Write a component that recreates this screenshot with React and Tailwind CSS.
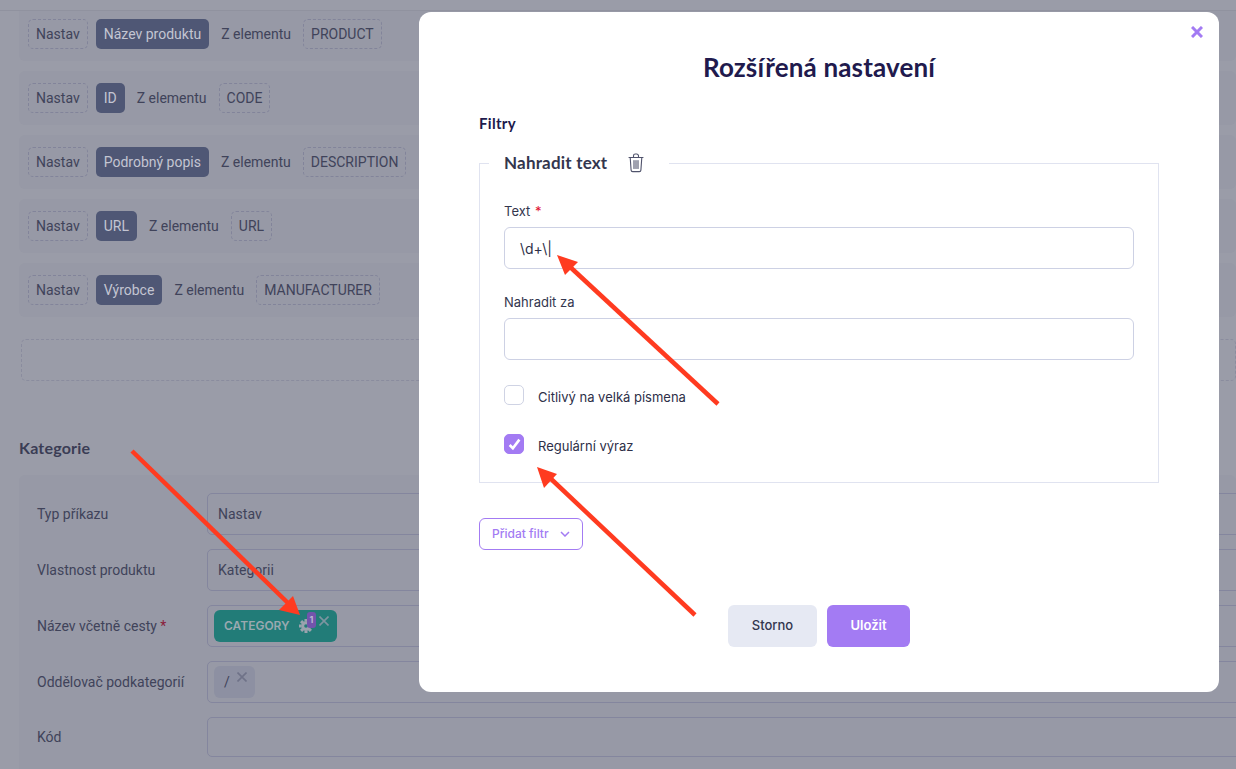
import React from "react";

const rows = [
  ["Název produktu", "PRODUCT"],
  ["ID", "CODE"],
  ["Podrobný popis", "DESCRIPTION"],
  ["URL", "URL"],
  ["Výrobce", "MANUFACTURER"],
];

function Dashed({ children }) {
  return (
    <span className="h-[30px] px-[7px] flex items-center rounded-[5px] border border-dashed border-[#82849a] text-[14px] text-[#40435a]">
      {children}
    </span>
  );
}

function Row({ name, el, first }) {
  return (
    <div className={"bg-[#9799a6] rounded-b-[6px] flex items-center pl-[9px] gap-2 " + (first ? "h-[50px] pb-[4px]" : "h-[54px] rounded-t-[6px]")}>
      <Dashed>Nastav</Dashed>
      <span className="h-[30px] px-2 flex items-center rounded-[5px] bg-[#4f5775] text-[14px] text-[#c3c5d2]">{name}</span>
      <span className="mx-1 text-[14px] text-[#40435a]">Z elementu</span>
      <Dashed>{el}</Dashed>
    </div>
  );
}

function Field({ label, req, children, h = "h-[42px]" }) {
  return (
    <div className="flex items-center">
      <div className="w-[188px] pl-[18px] shrink-0 whitespace-nowrap text-[14px] text-[#40435a]">
        {label}
        {req && <span className="text-[#8a1c3a]"> *</span>}
      </div>
      <div className={"w-[1100px] shrink-0 rounded-[5px] border border-[#84869e] flex items-center px-[10px] text-[14px] text-[#40435a] " + h}>
        {children}
      </div>
    </div>
  );
}

function Background() {
  return (
    <div className="w-[1236px] h-[769px] overflow-hidden bg-[#9a9ca8]" style={{ fontFamily: "Roboto, sans-serif" }}>
      <div className="h-[11px] bg-[#9a9ca8] border-b border-[#90929f]" />
      <div className="ml-[19px] flex flex-col gap-[10px]">
        {rows.map((r, i) => (
          <Row key={r[1]} name={r[0]} el={r[1]} first={i === 0} />
        ))}
      </div>
      <div className="ml-[21px] mt-[22px] h-[42px] rounded-[5px] border border-dashed border-[#8a8c9e]" />
      <div className="ml-[19px] mt-[57px] text-[16px] tracking-[0.2px] font-bold leading-[20px] text-[#3a3d55]" style={{ fontFamily: "Lato, sans-serif" }}>
        Kategorie
      </div>
      <div className="ml-[19px] mt-[17px] pt-[18px] bg-[#9799a6] rounded-[6px] flex flex-col gap-[14px] h-[400px]">
        <Field label="Typ příkazu">Nastav</Field>
        <Field label="Vlastnost produktu">Kategorii</Field>
        <Field label="Název včetně cesty" req>
          <div className="-ml-[4px] h-[32px] w-[123px] rounded-[6px] bg-[#227c78] relative flex items-center pl-[10px] text-[12px] font-semibold text-[#9aa9b0]" style={{ fontFamily: "Inter, sans-serif" }}>
            CATEGORY
            <svg className="absolute left-[84px] top-[8px]" width="16" height="16" viewBox="0 0 24 24" fill="none" stroke="#9aa3ae" strokeWidth="4.5" strokeLinejoin="round">
              <circle cx="12" cy="12" r="5" />
              <path d="M12 1.5v4M12 18.5v4M1.5 12h4M18.5 12h4M4.6 4.6l2.8 2.8M16.6 16.6l2.8 2.8M4.6 19.4l2.8-2.8M16.6 7.4l2.8-2.8" />
            </svg>
            <span className="absolute left-[93px] top-[2px] w-[9px] h-[16px] rounded-[3px] bg-[#7254ac] flex items-center justify-center text-[9px] font-bold text-[#b9b6d3]">1</span>
            <svg className="absolute left-[105px] top-[6px]" width="10" height="10" viewBox="0 0 10 10" stroke="#7d95a0" strokeWidth="1.6">
              <path d="M.5.5l9 9M9.5.5l-9 9" />
            </svg>
          </div>
        </Field>
        <Field label="Oddělovač podkategorií">
          <div className="-ml-[4px] h-[32px] w-[41px] rounded-[6px] bg-[#8d90a2] relative flex items-center pl-[10px] text-[14px] text-[#40435a]">
            /
            <svg className="absolute left-[23px] top-[6px]" width="10" height="10" viewBox="0 0 10 10" stroke="#6f7288" strokeWidth="1.6">
              <path d="M.5.5l9 9M9.5.5l-9 9" />
            </svg>
          </div>
        </Field>
        <Field label="Kód" h="h-[40px]" />
      </div>
    </div>
  );
}

function Check({ on }) {
  return (
    <span className={"w-[20px] h-[20px] rounded-[5px] flex items-center justify-center border " + (on ? "bg-[#a37bf3] border-[#a37bf3]" : "bg-white border-[#cfd3e4]")}>
      {on && (
        <svg width="13" height="13" viewBox="0 0 12 12" fill="none" stroke="white" strokeWidth="2.4">
          <path d="M1.5 6.5l3 3 6-8" />
        </svg>
      )}
    </span>
  );
}

function Modal() {
  return (
    <div className="absolute left-[419px] top-[12px] w-[800px] h-[680px] bg-white rounded-[12px] px-[60px] text-[#2e3048]" style={{ fontFamily: "Inter, sans-serif" }}>
      <svg className="absolute right-[16px] top-[14px]" width="12" height="12" viewBox="0 0 12 12" stroke="#a37bf3" strokeWidth="3">
        <path d="M1 1l10 10M11 1L1 11" />
      </svg>
      <h2 className="pt-[38px] text-center text-[26px] tracking-[0.15px] leading-[34px] font-bold text-[#211a4d]" style={{ fontFamily: "Lato, sans-serif" }}>
        Rozšířená nastavení
      </h2>
      <div className="mt-[29px] text-[15px] tracking-[0.3px] leading-[20px] font-bold text-[#211a4d]" style={{ fontFamily: "Lato, sans-serif" }}>Filtry</div>
      <fieldset className="mt-[17px] h-[333px] border border-[#e0e3f0] px-[24px] pb-0 m-0 min-w-0">
        <legend className="-ml-[15px] w-[180px] h-[26px] pl-[15px] flex items-center">
          <span className="text-[17px] font-bold text-[#33364e] tracking-[0.2px]" style={{ fontFamily: "Lato, sans-serif" }}>Nahradit text</span>
          <svg className="ml-[20px]" width="18" height="20" viewBox="0 0 18 20" fill="none" stroke="#50536c" strokeWidth="1.1" strokeLinecap="round">
            <path d="M2 4.5h14M6.5 4.5V2.8A1.8 1.8 0 0 1 8.3 1h1.4a1.8 1.8 0 0 1 1.8 1.8v1.7M3.2 4.5l.9 12.6A1.6 1.6 0 0 0 5.7 18.6h6.6a1.6 1.6 0 0 0 1.6-1.5l.9-12.6M7 7.5v8M9 7.5v8M11 7.5v8" />
          </svg>
        </legend>
        <div className="mt-[26px] text-[13px] leading-[18px] text-[#33364e]">
          Text <span className="ml-[1px] text-[#e0102f]">*</span>
        </div>
        <div className="mt-[7px] h-[42px] rounded-[6px] border border-[#cdd1e4] flex items-center pl-[15px] text-[14px]">\d+\|</div>
        <div className="mt-[24px] text-[13px] leading-[18px] text-[#33364e]">Nahradit za</div>
        <div className="mt-[7px] h-[42px] rounded-[6px] border border-[#cdd1e4]" />
        <div className="mt-[25px] h-[20px] flex items-center gap-[14px] text-[13px] leading-[20px]">
          <Check />
          <span className="pt-[4px]">Citlivý na velká písmena</span>
        </div>
        <div className="mt-[29px] h-[20px] flex items-center gap-[14px] text-[13px] leading-[20px]">
          <Check on />
          <span className="pt-[4px]">Regulární výraz</span>
        </div>
      </fieldset>
      <div className="mt-[35px] w-[104px] h-[32px] rounded-[6px] border border-[#a37bf3] flex items-center pl-[12px] gap-[11px] text-[12px] font-medium text-[#a37bf3]">
        Přidat filtr
        <svg width="10" height="6" viewBox="0 0 10 6" fill="none" stroke="#a37bf3" strokeWidth="1.5">
          <path d="M1 1l4 4 4-4" />
        </svg>
      </div>
      <div className="mt-[55px] ml-[249px] flex gap-[10px] text-[13px] font-medium">
        <span className="w-[89px] h-[42px] rounded-[6px] bg-[#e6e9f3] flex items-center justify-center text-[#33364e]">Storno</span>
        <span className="w-[83px] h-[42px] rounded-[6px] bg-[#a37bf3] flex items-center justify-center text-white font-semibold">Uložit</span>
      </div>
    </div>
  );
}

function Arrows() {
  const c = "#ff3b20";
  return (
    <svg className="absolute left-0 top-0 pointer-events-none" width="1236" height="769" viewBox="0 0 1236 769">
      <g stroke={c} strokeWidth="4.5" fill="none">
        <path d="M718 404L568 265" />
        <path d="M695 615L549 477" />
        <path d="M132 451L288 603" />
      </g>
      <g fill={c}>
        <polygon points="557,255 578,262 565,275" />
        <polygon points="537,467 557,474 544,488" />
        <polygon points="300,615 279,610 293,596" />
      </g>
    </svg>
  );
}

export default function App() {
  return (
    <div className="relative w-[1236px] h-[769px] overflow-hidden">
      <Background />
      <Modal />
      <Arrows />
    </div>
  );
}
